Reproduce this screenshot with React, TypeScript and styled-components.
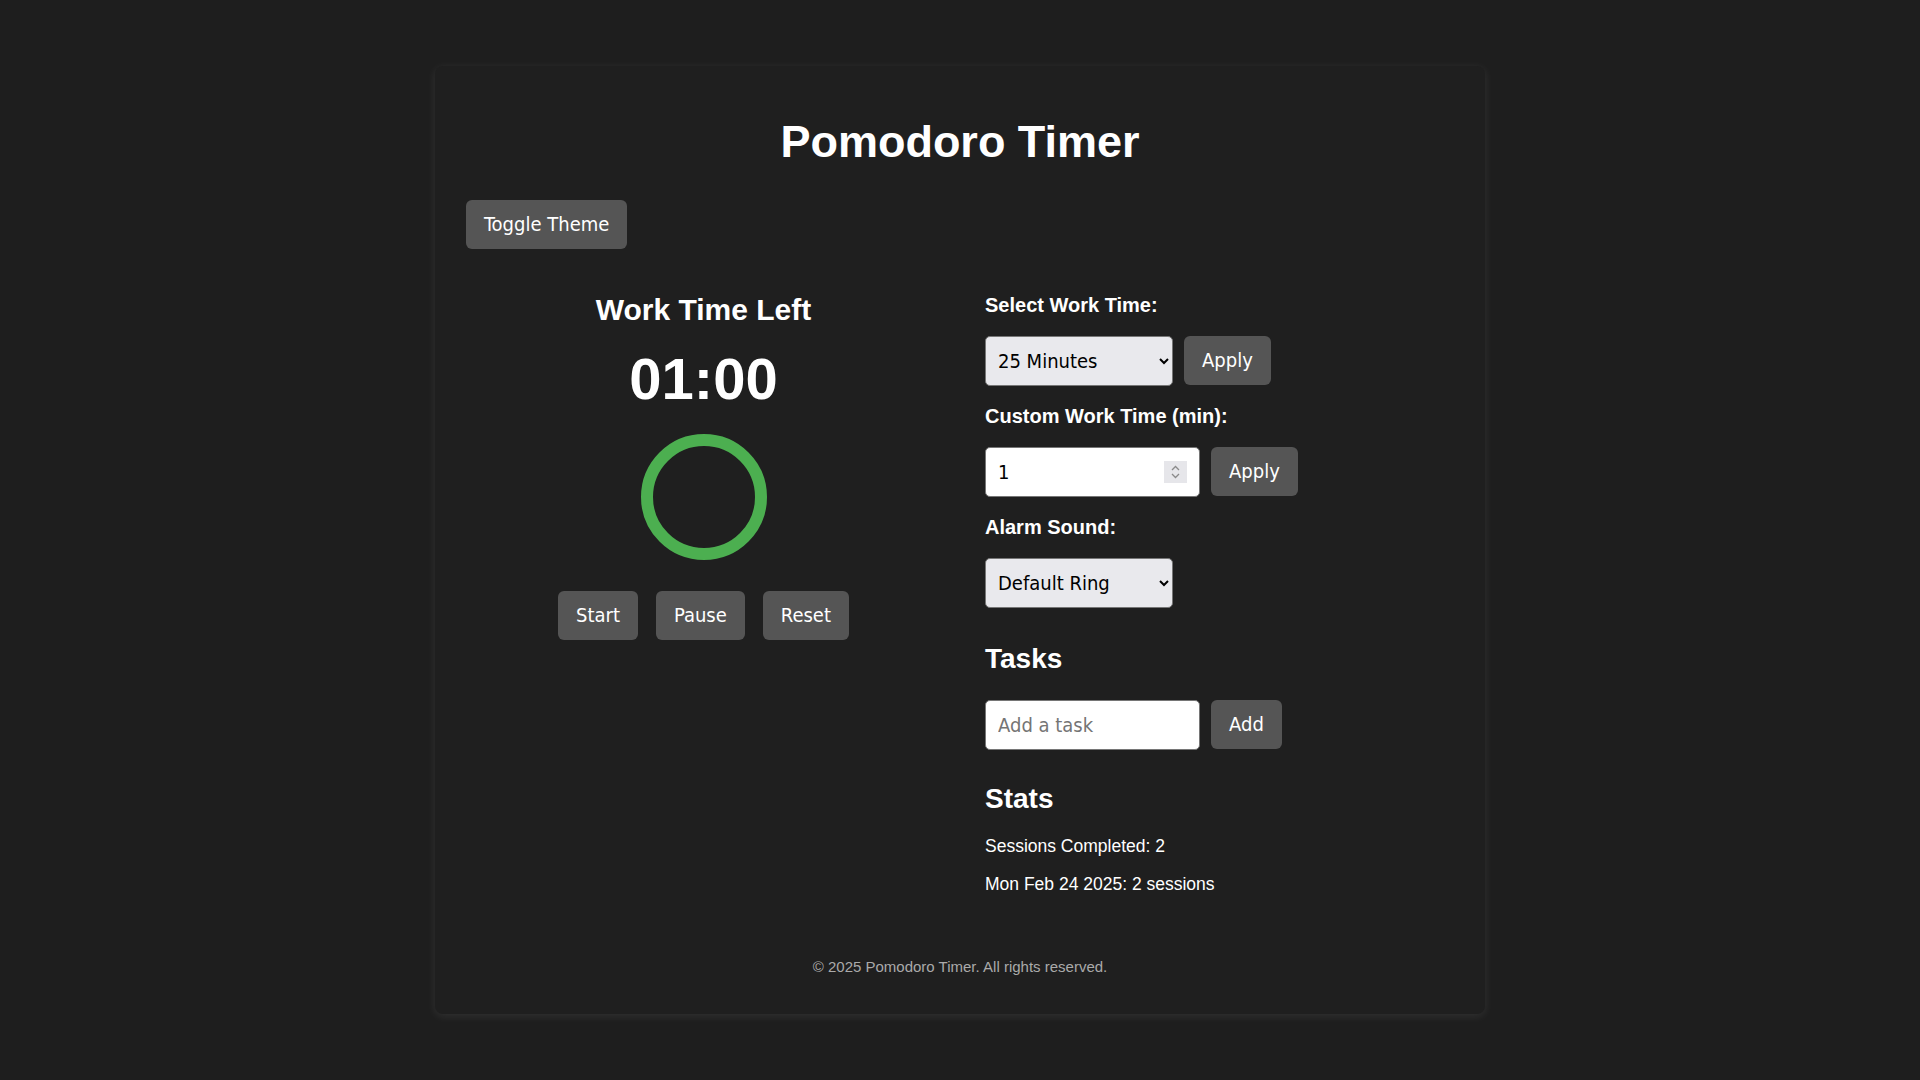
import styled, { createGlobalStyle } from 'styled-components';

const GlobalStyle = createGlobalStyle`
  body {
    margin: 0;
    background: #1e1e1e;
    color: #fff;
    font-family: "Liberation Sans", Arial, sans-serif;
  }
`;

const controlFont = `"DejaVu Sans Condensed", "DejaVu Sans", sans-serif`;

const Page = styled.div`
  padding: 66px 0 66px;
`;

const Card = styled.div`
  box-sizing: border-box;
  width: 1050px;
  margin: 0 auto;
  padding: 30px 31px 39px;
  background: #1f1f1f;
  border-radius: 8px;
  box-shadow: 0 2px 10px rgba(255, 255, 255, 0.09);
`;

const Title = styled.h1`
  margin: 20px 0 32px;
  text-align: center;
  font-size: 45px;
  line-height: 1.15;
  font-weight: 700;
`;

const Button = styled.button`
  box-sizing: border-box;
  height: 49px;
  padding: 0 18px;
  border: none;
  border-radius: 6px;
  background: #555;
  color: #fff;
  font-family: ${controlFont};
  font-stretch: condensed;
  font-size: 20px;
  cursor: pointer;
`;

const Columns = styled.div`
  display: grid;
  grid-template-columns: 475px 1fr;
  column-gap: 44px;
  margin-top: 44px;
`;

const TimerColumn = styled.div`
  display: flex;
  flex-direction: column;
  align-items: center;
`;

const Heading = styled.h2<{ $size: number }>`
  margin: 0;
  font-size: ${p => p.$size}px;
  line-height: 1.15;
  font-weight: 700;
`;

const Clock = styled.div`
  margin-top: 19px;
  font-size: 58px;
  line-height: 1.15;
  font-weight: 700;
`;

const Ring = styled.svg`
  display: block;
  margin-top: 21px;
`;

const Controls = styled.div`
  display: flex;
  gap: 18px;
  margin-top: 31px;
`;

const Settings = styled.div`
  display: flex;
  flex-direction: column;
  align-items: flex-start;
  padding-top: 1px;
`;

const Label = styled.label`
  display: block;
  margin-bottom: 19px;
  font-size: 20px;
  line-height: 23px;
  font-weight: 700;
`;

const Row = styled.div`
  display: flex;
  gap: 11px;
  margin-bottom: 19px;
`;

const Select = styled.select<{ $width: number }>`
  box-sizing: border-box;
  width: ${p => p.$width}px;
  height: 50px;
  padding: 0 8px;
  border: 1px solid #767676;
  border-radius: 5px;
  background-color: #e9e9ed;
  color: #000;
  font-family: ${controlFont};
  font-stretch: condensed;
  font-size: 20px;
`;

const InputWrap = styled.div`
  position: relative;
  display: flex;
`;

const Input = styled.input<{ $width: number }>`
  box-sizing: border-box;
  width: ${p => p.$width}px;
  height: 50px;
  padding: 0 12px;
  border: 1px solid #767676;
  border-radius: 5px;
  background: #fff;
  color: #000;
  font-family: ${controlFont};
  font-stretch: condensed;
  font-size: 20px;
  -moz-appearance: textfield;

  &::placeholder {
    color: #757575;
  }

  &::-webkit-inner-spin-button,
  &::-webkit-outer-spin-button {
    -webkit-appearance: none;
    margin: 0;
  }
`;

const Spinner = styled.span`
  position: absolute;
  top: 14px;
  right: 13px;
  width: 23px;
  height: 22px;
  display: flex;
  align-items: center;
  justify-content: center;
  background: #e6e6ea;
  pointer-events: none;
`;

const SideHeading = styled(Heading)`
  margin: 16px 0 25px;
`;

const StatsHeading = styled(Heading)`
  margin: 14px 0 21px;
`;

const StatLine = styled.p`
  margin: 0 0 17.5px;
  font-size: 17.5px;
  line-height: 1.15;

  &:last-child {
    margin-bottom: 0;
  }
`;

const Footer = styled.footer`
  margin-top: 64px;
  text-align: center;
  font-size: 15px;
  line-height: 1.15;
  color: #aaa;
`;

export default function App() {
  return (
    <Page>
      <GlobalStyle />
      <Card>
        <Title>Pomodoro Timer</Title>
        <Button>Toggle Theme</Button>

        <Columns>
          <TimerColumn>
            <Heading $size={30}>Work Time Left</Heading>
            <Clock>01:00</Clock>
            <Ring width="126" height="126" viewBox="0 0 126 126">
              <circle cx="63" cy="63" r="57" fill="none" stroke="#4caf50" strokeWidth="12" />
            </Ring>
            <Controls>
              <Button>Start</Button>
              <Button>Pause</Button>
              <Button>Reset</Button>
            </Controls>
          </TimerColumn>

          <Settings>
            <Label>Select Work Time:</Label>
            <Row>
              <Select $width={188} defaultValue="25">
                <option value="25">25 Minutes</option>
                <option value="50">50 Minutes</option>
              </Select>
              <Button>Apply</Button>
            </Row>

            <Label>Custom Work Time (min):</Label>
            <Row>
              <InputWrap>
                <Input $width={215} type="number" defaultValue={1} min={1} />
                <Spinner>
                  <svg width="11" height="16" viewBox="0 0 11 16" fill="none" stroke="#8a8a8a" strokeWidth="1.3">
                    <path d="M2 6 L5.5 2.5 L9 6" />
                    <path d="M2 10 L5.5 13.5 L9 10" />
                  </svg>
                </Spinner>
              </InputWrap>
              <Button>Apply</Button>
            </Row>

            <Label>Alarm Sound:</Label>
            <Row>
              <Select $width={188} defaultValue="default">
                <option value="default">Default Ring</option>
                <option value="bell">Bell</option>
              </Select>
            </Row>

            <SideHeading $size={28}>Tasks</SideHeading>
            <Row>
              <Input $width={215} type="text" placeholder="Add a task" />
              <Button>Add</Button>
            </Row>

            <StatsHeading $size={28}>Stats</StatsHeading>
            <div>
              <StatLine>Sessions Completed: 2</StatLine>
              <StatLine>Mon Feb 24 2025: 2 sessions</StatLine>
            </div>
          </Settings>
        </Columns>

        <Footer>© 2025 Pomodoro Timer. All rights reserved.</Footer>
      </Card>
    </Page>
  );
}
